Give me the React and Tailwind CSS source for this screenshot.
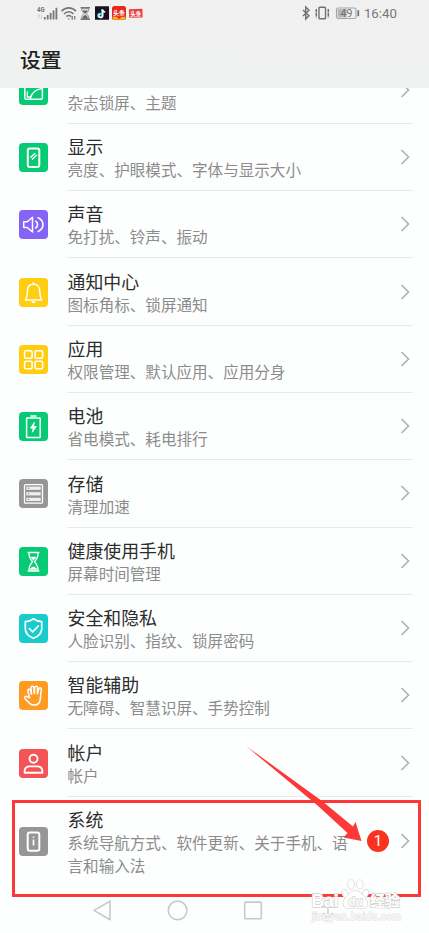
import React from 'react';

const iconProps = {
    viewBox: '0 0 29 29',
    fill: 'none',
    stroke: '#fff',
    strokeWidth: 1.5,
    strokeLinecap: 'round',
    strokeLinejoin: 'round',
    className: 'w-[29px] h-[29px] block',
};

const icons = {
    wallpaper: (
        <svg {...iconProps}>
            <rect x="5.8" y="5" width="17.6" height="18.300" rx="1.500" />
            <path d="M11.500 22.500c.8-5 4.500-9 11.500-10M8.300 16v5h3" strokeWidth="1.300" />
        </svg>
    ),
    display: (
        <svg {...iconProps}>
            <rect x="8.800" y="5.400" width="11.500" height="18.600" rx="2" strokeWidth="2" />
            <path d="M11.800 14.200l4-3.800M13.400 16.200l4-4" strokeWidth="1.400" />
        </svg>
    ),
    sound: (
        <svg {...iconProps}>
            <path d="M4.700 11.700h3.500l5.300-4.500v14.800l-5.300-4.500H4.700z" />
            <path d="M16.800 11.200c2.300 1.700 2.300 5.100 0 6.800M19.200 7.700c6.400 3 6.400 10.800 0 13.800" strokeWidth="1.600" />
        </svg>
    ),
    bell: (
        <svg {...iconProps}>
            <path d="M14.500 6.300c-4 0-6 2.900-6 6.700 0 4.500-.7 6.700-2 9h16.200c-1.400-2.300-2-4.500-2-9 0-3.800-2.200-6.700-6.200-6.700z" />
            <path d="M14.500 5v1M13.400 24.200h2.200" strokeWidth="1.800" />
        </svg>
    ),
    apps: (
        <svg {...iconProps} strokeWidth="1.600">
            <rect x="5.600" y="5.800" width="7.500" height="7.500" rx="1.300" />
            <rect x="16.100" y="5.800" width="7.500" height="7.500" rx="1.300" />
            <rect x="5.600" y="16.300" width="7.500" height="7.500" rx="1.300" />
            <rect x="16.100" y="16.300" width="7.500" height="7.500" rx="1.300" />
        </svg>
    ),
    battery: (
        <svg {...iconProps}>
            <rect x="7.600" y="5.900" width="13.600" height="19.700" rx=".7" />
            <path d="M12 3.900h5" strokeWidth="1.500" />
            <path d="M15.200 10.600l-3.700 5.500h2.500l-.6 4.100 4-5.700h-2.600z" fill="#fff" strokeWidth=".8" />
        </svg>
    ),
    storage: (
        <svg {...iconProps} strokeWidth="1.300">
            <rect x="5.500" y="5.600" width="18" height="18.600" rx="1" />
            <rect x="7.300" y="7.600" width="14.400" height="3.200" fill="#fff" stroke="none" opacity=".85" />
            <rect x="7.300" y="13.200" width="14.400" height="3.200" fill="#fff" stroke="none" opacity=".85" />
            <rect x="7.300" y="18.800" width="14.400" height="3.200" fill="#fff" stroke="none" opacity=".85" />
            <path d="M9.300 9.200h.3M9.300 14.800h.3M9.300 20.400h.3" stroke="#969696" />
        </svg>
    ),
    hourglass: (
        <svg {...iconProps} strokeWidth="1.300">
            <path d="M9.200 5.600h10.600M9.200 24h10.600" strokeWidth="1.500" />
            <path d="M10 6.300c0 4.200 1.100 6 3.600 8.500-2.500 2.500-3.600 4.500-3.600 8.500M19 6.300c0 4.200-1.100 6-3.600 8.500 2.500 2.500 3.600 4.500 3.600 8.500" />
            <path d="M11.900 10h5.200l-2.600 3.200zM11 22.800c.5-1.900 2-2.600 3.500-2.900 1.500.3 3 1 3.500 2.900z" fill="#fff" strokeWidth=".5" />
        </svg>
    ),
    shield: (
        <svg {...iconProps} strokeWidth="1.700">
            <path d="M14.500 4.700c2.500 1.900 5.200 2.800 8.200 3v7c0 4.700-3.300 7.600-8.200 9.600-4.900-2-8.200-4.900-8.200-9.600v-7c3-.2 5.700-1.100 8.200-3z" />
            <path d="M10.300 14.500l3.400 3.300 5.600-5.800" />
        </svg>
    ),
    hand: (
        <svg {...iconProps} strokeWidth="1.500">
            <path d="M10.600 16.800L8.900 9.800c-.4-1.800 2.100-2.300 2.600-.5l1 3.700L12 6.700c-.1-1.900 2.600-2 2.800-.1l.5 6 .5-6.100c.1-1.900 2.800-1.700 2.700.1l-.1 6.300 1.400-5c.5-1.700 2.900-1.100 2.600.7-.5 3-.8 5-1 8.500-.3 4.700-2.500 6.900-6 6.900-3.500 0-5.200-1.700-9.400-6.600-1.100-1.500.5-2.700 1.900-1.900z" />
        </svg>
    ),
    account: (
        <svg {...iconProps} strokeWidth="1.900">
            <circle cx="14.500" cy="9.700" r="4" />
            <path d="M5.600 23.700v-1.300c0-3.600 2.500-5 5.500-5h6.800c3 0 5.500 1.400 5.500 5v1.300z" />
        </svg>
    ),
    system: (
        <svg {...iconProps}>
            <rect x="8.700" y="5.400" width="11.600" height="18.400" rx="2" strokeWidth="2" />
            <path d="M14.500 9.400v1.400M14.500 12.400v6" strokeWidth="1.700" strokeLinecap="butt" />
        </svg>
    ),
};

// the first row is scrolled half under the header, only its description shows
const items = [
    { icon: 'wallpaper', color: 'bg-[#06cb74]', title: '', desc: '杂志锁屏、主题' },
    { icon: 'display', color: 'bg-[#06cb74]', title: '显示', desc: '亮度、护眼模式、字体与显示大小' },
    { icon: 'sound', color: 'bg-[#8563f5]', title: '声音', desc: '免打扰、铃声、振动' },
    { icon: 'bell', color: 'bg-[#ffcd12]', title: '通知中心', desc: '图标角标、锁屏通知' },
    { icon: 'apps', color: 'bg-[#ffcd12]', title: '应用', desc: '权限管理、默认应用、应用分身' },
    { icon: 'battery', color: 'bg-[#06cb74]', title: '电池', desc: '省电模式、耗电排行' },
    { icon: 'storage', color: 'bg-[#969696]', title: '存储', desc: '清理加速' },
    { icon: 'hourglass', color: 'bg-[#06cb74]', title: '健康使用手机', desc: '屏幕时间管理' },
    { icon: 'shield', color: 'bg-[#18cccc]', title: '安全和隐私', desc: '人脸识别、指纹、锁屏密码' },
    { icon: 'hand', color: 'bg-[#ff9b22]', title: '智能辅助', desc: '无障碍、智慧识屏、手势控制' },
    { icon: 'account', color: 'bg-[#f45455]', title: '帐户', desc: '帐户' },
];

function Chevron() {
    return (
        <svg viewBox="0 0 10 16" className="w-[10px] h-[16px] shrink-0" fill="none" stroke="#b2b2b2" strokeWidth="1.7">
            <path d="M1.500 1l7 7-7 7" />
        </svg>
    );
}

function RowIcon({ name, color }) {
    return <div className={`w-[29px] h-[29px] rounded-[4px] shrink-0 ${color}`}>{icons[name]}</div>;
}

function SettingRow({ item }) {
    return (
        <div className="h-[67.3px] shrink-0 flex items-center pl-[19px] pr-4">
            <RowIcon name={item.icon} color={item.color} />
            <div className="ml-[19px] flex-1 h-full flex items-center border-b border-[#e9eaea]">
                <div className="flex-1 pl-[0.5px] pt-[1.2px] whitespace-nowrap">
                    <div className="h-[24px] text-[17.9px] leading-[24px] text-[#2c2c2c]">{item.title}</div>
                    <div className="text-[15.57px] leading-[23px] text-[#8c8c8c]">{item.desc}</div>
                </div>
                <div className="mr-[3px]"><Chevron /></div>
            </div>
        </div>
    );
}

function StatusBar() {
    return (
        <div className="h-[26px] flex items-center justify-between pl-[36px] pr-[32px]">
            <svg viewBox="0 0 108 16" className="w-[108px] h-[16px]">
                <text x="1" y="7" fontSize="7" fontWeight="bold" fill="#707070" fontFamily="Roboto, sans-serif" textLength="7.500" lengthAdjust="spacingAndGlyphs">4G</text>
                <path d="M3 9.500v4M1.800 10.800L3 9.500M5.300 9.500v4M6.500 12.200L5.300 13.500" stroke="#c8c8c8" strokeWidth=".8" fill="none" />
                <path d="M8.800 14.500v-2.500M11.700 14.500v-4.500M14.600 14.500V8M17.500 14.500V5.500M20.400 14.500V2.800" stroke="#777" strokeWidth="1.800" />
                <g fill="none" stroke="#777" strokeWidth="1.700">
                    <path d="M25.500 6.200c4-4.500 10.500-4.500 14.500 0M28 9c2.800-3 6.800-3 9.500 0M30.400 11.600c1.500-1.500 3.300-1.500 4.600 0" />
                    <path d="M32.700 13.200v1.300M36.200 11v3.800M38.700 11v3.500" strokeWidth="1.300" />
                </g>
                <path d="M44.500 2.700h9.500M44.500 14.300h9.500" stroke="#777" strokeWidth="1.500" />
                <path d="M45.700 3.500h7c0 2.700-1 3.800-2.500 5 1.500 1.200 2.500 2.500 2.500 5h-7c0-2.500 1-3.800 2.500-5-1.500-1.200-2.500-2.300-2.500-5z" fill="#ddd" stroke="#888" strokeWidth=".9" />
                <path d="M46.700 5.500h5c-.5 1.400-1.500 2.200-2.500 3-1-.8-2-1.600-2.500-3zM46.500 13.500c.2-2 1.500-3 2.700-3.500 1.300.5 2.500 1.500 2.700 3.500z" fill="#666" />
                <rect x="59" y="1.200" width="14" height="13.600" rx=".5" fill="#1d0f20" />
                <g fill="none" strokeWidth="1.700">
                    <path d="M65.800 4v6.200c0 2.700-3.800 2.500-3.800.2 0-1.200 1-1.900 2-1.800M65.800 4.300c.2 1.500 1.200 2.300 2.600 2.400" stroke="#25d8dc" />
                    <path d="M67.100 4.800v6.200c0 2.700-3.800 2.500-3.800.2" stroke="#e84a70" strokeWidth="1" />
                    <path d="M66.700 4.400v6.200c0 2.700-3.800 2.500-3.800.2 0-1.200 1-1.900 2-1.800M66.700 4.700c.2 1.500 1.200 2.300 2.600 2.400" stroke="#fff" strokeWidth="1.300" />
                </g>
                <rect x="76" y="1.100" width="14" height="13.800" rx="2.500" fill="#e52919" />
                <path d="M76.300 11.800h13.400l-1 3H77.500z" fill="#f6b628" />
                <path d="M80 11.500h6l-3 2.500z" fill="#e52919" />
                <text x="77" y="9.700" fontSize="6" fontWeight="bold" fill="#fff" textLength="12">头条</text>
                <rect x="93" y="4" width="13.500" height="8.600" rx=".5" fill="#e84142" transform="rotate(-2 100 8)" />
                <text x="94.200" y="10.600" fontSize="5.500" fontWeight="bold" fill="#fff" textLength="11">头条</text>
            </svg>
            <div className="flex items-center">
                <svg viewBox="0 0 60 16" className="w-[60px] h-[16px]" fill="none" stroke="#707070" strokeWidth="1.400">
                    <path d="M2 5l6 5.800-3.300 3.200V2L8 5.200 2 11" />
                    <rect x="18" y="2.300" width="6.500" height="11.400" rx=".8" />
                    <path d="M15.300 4v8.500M27.300 4v8.500" strokeWidth="1.500" strokeDasharray="3.500 .5" />
                    <rect x="35.500" y="3" width="19.500" height="10.500" rx="1.500" stroke="#a4a4a4" strokeWidth="1.100" />
                    <rect x="36.700" y="4.200" width="9" height="8.200" fill="#b4b4b4" stroke="none" />
                    <path d="M57.300 5.200v6" strokeWidth="1.700" />
                    <text x="39.500" y="12" fontSize="10.500" fill="#707070" stroke="none" fontFamily="Roboto, sans-serif">49</text>
                </svg>
                <span className="ml-[3px] pt-px font-['Roboto',sans-serif] text-[13.3px] leading-[16px] text-[#777]">16:40</span>
            </div>
        </div>
    );
}

function NavBar() {
    return (
        <div className="h-[32px] pl-[92px] flex items-center">
            <svg viewBox="0 0 250 24" className="w-[250px] h-[24px]" fill="none" stroke="#c9c9c9" strokeWidth="1.600">
                <path d="M2 12.400L18 3.200v18.500z" strokeLinejoin="round" />
                <circle cx="85.600" cy="12.400" r="9.300" />
                <rect x="152.700" y="4.100" width="16.600" height="16.600" rx=".8" />
                <path d="M236 7v13M231 15l5 5 5-5M229 9h5M238 9h5" stroke="#c8c8c8" strokeWidth="1.300" />
            </svg>
        </div>
    );
}

function Watermark() {
    return (
        <svg viewBox="0 0 100 50" className="absolute left-[308px] top-[875px] w-[100px] h-[50px]">
            <g fill="#fff" stroke="#d9d9d9" strokeWidth=".8">
                <ellipse cx="37" cy="18.500" rx="3" ry="4.300" transform="rotate(-20 37 18.500)" />
                <ellipse cx="43" cy="9.500" rx="3.300" ry="4.700" />
                <ellipse cx="51.800" cy="9.500" rx="3.300" ry="4.700" />
                <ellipse cx="57.500" cy="18.500" rx="3" ry="4.300" transform="rotate(20 57.500 18.500)" />
                <path d="M47.300 15.500c4 0 6 3 9 6 4.500 4.500 4.500 12-1.500 12.200-3 .1-4-.5-7.500-.5s-4.500.6-7.500.5c-6-.2-6-7.700-1.500-12.200 3-3 5-6 9-6z" />
            </g>
            <g fill="#fff" stroke="#d0d0d0" strokeWidth="1.300" paintOrder="stroke" fontWeight="bold">
                <text x="3.500" y="31.500" fontSize="18.500" fontFamily="'Liberation Sans', sans-serif" textLength="27" lengthAdjust="spacingAndGlyphs">Bai</text>
                <text x="40" y="31" fontSize="13.500" textLength="15" lengthAdjust="spacingAndGlyphs" fontFamily="'Liberation Sans', sans-serif">du</text>
                <text x="62" y="31" fontSize="15" textLength="30">经验</text>
            </g>
            <text x="4" y="44.500" fontSize="10" textLength="89" fill="#fff" stroke="#dcdcdc" strokeWidth="1" paintOrder="stroke" fontFamily="'Liberation Sans', sans-serif">jingyan.baidu.com</text>
        </svg>
    );
}

export default function App() {
    return (
        <div className="relative w-[429px] h-[933px] overflow-hidden bg-[#fdfefe] font-['Noto_Sans_CJK_SC',sans-serif]">
            <header className="h-[88px] bg-linear-to-b from-[#f0f0f0] to-[#f0f2f1]">
                <StatusBar />
                <h1 className="pl-[20px] pt-[17px] text-[20.8px] leading-[32px] font-medium text-[#222]">设置</h1>
            </header>

            <main className="h-[806px] overflow-hidden flex flex-col">
                <div className="-mt-[31.5px] flex flex-col shrink-0">
                    {items.map((item) => (
                        <SettingRow key={item.icon} item={item} />
                    ))}
                </div>
                <div className="h-[89px] shrink-0 flex items-center pl-[19px] pr-[19px]">
                    <RowIcon name="system" color="bg-[#969696]" />
                    <div className="ml-[19.5px] w-[290px] pt-[2px]">
                        <div className="text-[17.9px] leading-[24px] text-[#2c2c2c]">系统</div>
                        <div className="text-[15.57px] leading-[23px] text-[#8c8c8c] whitespace-nowrap">
                            系统导航方式、软件更新、关于手机、语<br />言和输入法
                        </div>
                    </div>
                    <div className="ml-[9.5px] w-[22px] h-[22px] rounded-full bg-[#fa3220] text-white text-[15px] leading-[22px] text-center font-['Roboto',sans-serif]">1</div>
                    <div className="ml-auto"><Chevron /></div>
                </div>
            </main>

            <NavBar />

            {/* highlight box and pointer over the system row */}
            <div className="absolute left-[12px] top-[800px] w-[409px] h-[97px] border-[3px] border-[#fd3838]" />
            <svg viewBox="0 0 120 100" className="absolute left-[244px] top-[744px] w-[120px] h-[100px]">
                <path d="M2 2L78 57l31 25.500 2.500-4.500 6 19-18-3.500 4-4.500L73 61z" fill="#fd3838" />
            </svg>
            <Watermark />
        </div>
    );
}
